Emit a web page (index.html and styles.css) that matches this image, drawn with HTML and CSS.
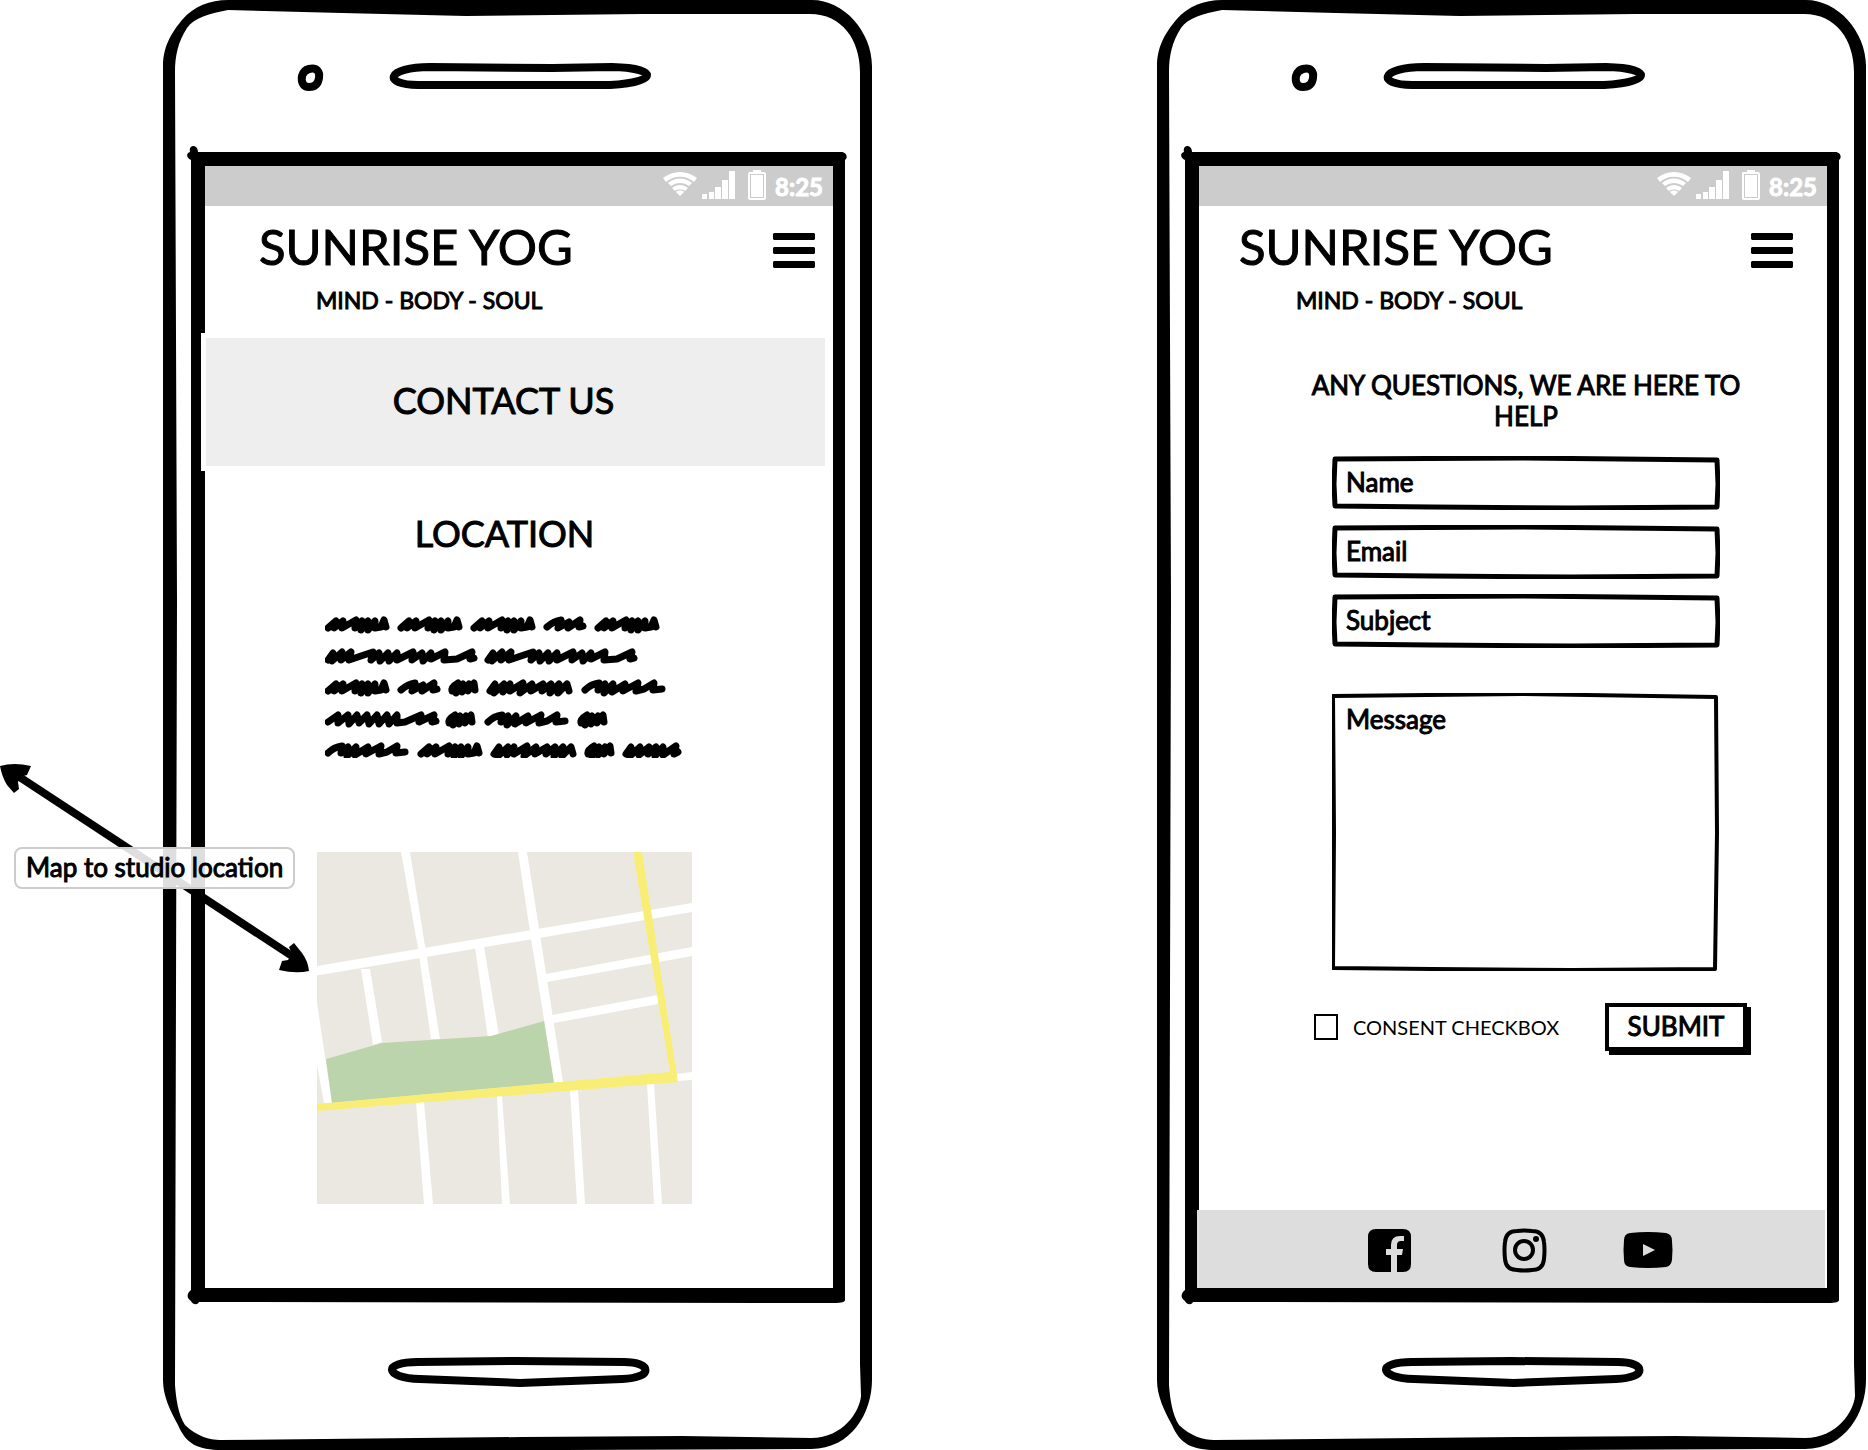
FILE: index.html
```
<!DOCTYPE html>
<html lang="en">
<head>
<meta charset="utf-8">
<title>Sunrise Yog – mobile wireframes</title>
<meta name="viewport" content="width=device-width, initial-scale=1">
<link rel="stylesheet" href="styles.css">
</head>
<body>
<svg class="defs" aria-hidden="true">
  <defs>
    <symbol id="phone-frame" viewBox="0 0 710 1450" preserveAspectRatio="none">
      <path fill-rule="evenodd" d="M66 0H650C682 0 710 32 710 66V1380C710 1412 690 1449 649 1449L400 1450L60 1450C36 1450 24 1444 16 1425C8 1410 1 1396 1 1380V66C1 44 12 30 20 20C32 6 48 0 66 0ZM66 10C46 14 32 18 25 28C16 42 13 56 13 72L15 600L13 1385C14 1398 16 1414 23 1425C34 1436 48 1440 58 1440L360 1437L520 1436L649 1438C682 1438 698 1410 699 1396L698 1364V72C698 40 680 14 648 14L480 14L304 16L180 13Z"/>
      <path d="M28 152C26 144 36 144 36 152H679C685 152 686 158 683 160V1300C683 1302 680 1303 672 1303L37 1302C35 1306 30 1304 29 1301C24 1298 25 1293 29 1290V160C24 158 24 153 28 152ZM43 166V1288H671V166Z" fill-rule="evenodd"/>
      <path class="line" d="M147 69C155 67 158 72 157 78C156 85 152 87 147 87C141 87 139 82 140 76C141 72 143 70 147 69Z"/>
      <path class="line" d="M268 67C224 67 220 85 256 85H448C498 82 496 68 450 67L390 68Z"/>
      <path class="line" d="M355 1361L256 1362C220 1362 222 1378 258 1379L358 1383L460 1379C492 1378 490 1362 462 1362Z"/>
    </symbol>
    <symbol id="status-icons" viewBox="0 0 104 32">
      <path d="M0 8C10 0 24 0 34 8L31 12C23 5 11 5 3 12ZM5 13C12 7 22 7 29 13L26 16C20 12 14 12 8 16ZM9 18C14 14 20 14 25 18L22 21C19 19 15 19 12 21ZM13 22C15 20 19 20 21 22L17 26Z"/>
      <path d="M39 24h5v5h-5zM46 22h5v7h-5zM52 17h6v12h-6zM59 10h6v19h-6zM66 1h6v28h-6z"/>
      <path d="M86 2H90V0H98V2H101Q103 2 103 4V28Q103 30 101 30H87Q85 30 85 28V4Q85 2 86 2ZM87 4V28H101V4Z" fill-rule="evenodd"/>
      <path d="M88 5h12v22H88z"/>
    </symbol>
    <symbol id="bars" viewBox="0 0 42 36">
      <path d="M1 0h40l1 1v5l-1 1H1L0 6V1zM1 14h40l1 1v5l-1 1H1l-1-1v-5zM1 28h40l1 1v5l-1 1H1l-1-1v-5z"/>
    </symbol>
    <symbol id="box" viewBox="0 0 388 54" preserveAspectRatio="none">
      <path vector-effect="non-scaling-stroke" d="M3 3L190 2L385 4L386 28L385 51L240 52L100 51L3 50L2 28Z"/>
    </symbol>
    <symbol id="box-tall" viewBox="0 0 388 278" preserveAspectRatio="none">
      <path vector-effect="non-scaling-stroke" d="M1 3L190 1L384 4L385 140L383 276L240 277L100 276L1 275L2 140Z"/>
    </symbol>
  </defs>
</svg>

<main class="board">
  <section class="phone phone-contact">
    <svg class="frame" aria-hidden="true"><use href="#phone-frame"/></svg>
    <div class="screen">
      <div class="status"><svg class="status-icons" aria-hidden="true"><use href="#status-icons"/></svg><span>8:25</span></div>
      <header class="site-header">
        <div class="brand"><h1>SUNRISE YOG</h1><p>MIND - BODY - SOUL</p></div>
        <button class="menu" type="button" aria-label="Menu"><svg aria-hidden="true"><use href="#bars"/></svg></button>
      </header>
      <div class="banner"><h2>CONTACT US</h2></div>
      <div class="location">
        <h2>LOCATION</h2>
        <svg class="scribble" viewBox="0 0 358 142" role="img" aria-label="Address placeholder">
          <defs>
            <path id="w1" d="M3 12L11 5L9 12L18 5L17 12L31 4L30 12L37 5L36 14L43 5L43 14L50 5L50 12L56 11L59 4L61 11"/>
            <path id="w2" d="M3 11Q10 5 17 4L14 12L25 6L24 12L36 4L35 11L39 10"/>
            <path id="w3" d="M3 12Q2 8 9 4L7 14L14 5L13 13L20 5L19 12L25 4L26 11"/>
            <path id="w4" d="M3 11Q9 5 17 4L16 11L23 5L22 14L31 5L30 13L43 5L41 12L56 4L54 12L62 10L72 4L71 11L80 10"/>
            <path id="w5" d="M3 12L8 5L7 14L17 5L16 13L23 5L23 12L36 4L33 14L45 5L44 12L56 5L55 12L64 5L63 14L72 5L71 14L80 5L82 12"/>
            <path id="w6" d="M3 12L8 5L7 13L17 4L16 12L26 4L24 12L48 4L46 12L54 5L55 13L63 5L64 13L72 5L72 12L88 4L87 12L97 5L98 13L106 5L106 11L120 4L119 12L132 11L147 4L145 11L149 10"/>
          </defs>
          <use href="#w1"/><use href="#w1" x="73"/><use href="#w1" x="146"/><use href="#w2" x="219"/><use href="#w1" x="270"/>
          <use href="#w6" y="32"/><use href="#w6" x="160" y="32"/>
          <use href="#w1" y="63"/><use href="#w2" x="73" y="63"/><use href="#w3" x="124" y="63"/><use href="#w5" x="162" y="63"/><use href="#w4" x="257" y="63"/>
          <path d="M3 106L13 99L13 107L23 99L24 108L32 99L34 107L42 99L44 108L52 99L54 108L62 99L64 108L72 99L72 107L80 106L96 99L94 106L109 99L107 106L111 105"/>
          <use href="#w3" x="121" y="95"/><use href="#w4" x="160" y="95"/><use href="#w3" x="253" y="95"/>
          <use href="#w4" y="126"/><use href="#w1" x="93" y="126"/><use href="#w5" x="166" y="126"/><use href="#w3" x="260" y="126"/>
          <path transform="translate(298 126)" d="M3 12L8 5L7 14L17 5L16 13L26 5L25 12L33 5L32 14L40 5L40 13L53 4L51 12L55 10"/>
        </svg>
        <svg class="map" viewBox="0 0 375 352" role="img" aria-label="Street map">
          <path fill="#ebe8e1" d="M0 0H375V352H0z"/>
          <g fill="#fff">
            <path d="M84 0h9l15 94 15 93h-9L101 96ZM201 0h9l36 230h-9L213 80ZM0 114L375 51V60L0 123.500ZM44 117h9l12 73-9 3ZM158 95h9l15 88-11 3ZM229 122L375 95v9L230 130ZM235 163L341 143v9L237 171ZM0 151L15 251H7L0 213ZM99 250h8l9 102h-9ZM180 244h5l8 108h-8ZM253 238h8l7 114h-8ZM330 232h7l8 120h-8ZM360 222l15-2v8l-15 1Z"/>
          </g>
          <path fill="#bcd4ac" d="M9 207L65 191 174 184 227 169 237 231 15 251Z"/>
          <path fill="#f9ee75" d="M316 0h9l36 230L0 259v-7L353 220Z"/>
        </svg>
      </div>
    </div>
    <svg class="arrow" viewBox="0 0 312 212" aria-hidden="true">
      <path d="M18 13L292 193" stroke="#000" stroke-width="8"/>
      <path d="M0 3Q14 -1 31 3L27 12L20 14L18 19L19 26L14 30L7 22Q2 14 0 3ZM309 208Q296 211 279 207L282 198L288 197L292 191L289 184L294 180L302 190Q308 198 309 208Z"/>
    </svg>
    <p class="callout">Map to studio location</p>
  </section>

  <section class="phone phone-form">
    <svg class="frame" aria-hidden="true"><use href="#phone-frame"/></svg>
    <div class="screen">
      <div class="status"><svg class="status-icons" aria-hidden="true"><use href="#status-icons"/></svg><span>8:25</span></div>
      <header class="site-header">
        <div class="brand"><h1>SUNRISE YOG</h1><p>MIND - BODY - SOUL</p></div>
        <button class="menu" type="button" aria-label="Menu"><svg aria-hidden="true"><use href="#bars"/></svg></button>
      </header>
      <form class="contact-form">
        <h2>ANY QUESTIONS, WE ARE HERE TO HELP</h2>
        <div class="field"><svg aria-hidden="true"><use href="#box"/></svg><input type="text" aria-label="Name" placeholder="Name"></div>
        <div class="field"><svg aria-hidden="true"><use href="#box"/></svg><input type="email" aria-label="Email" placeholder="Email"></div>
        <div class="field"><svg aria-hidden="true"><use href="#box"/></svg><input type="text" aria-label="Subject" placeholder="Subject"></div>
        <div class="field message"><svg aria-hidden="true"><use href="#box-tall"/></svg><textarea aria-label="Message" placeholder="Message"></textarea></div>
        <div class="actions">
          <input type="checkbox" id="consent"><label for="consent">CONSENT CHECKBOX</label>
          <button class="submit" type="submit">SUBMIT</button>
        </div>
      </form>
      <footer class="social">
        <a href="#facebook" aria-label="Facebook"><svg viewBox="0 0 43 43" width="43" height="43"><path d="M8 0H35Q43 0 43 8V35Q43 43 35 43H29V26H34L35 20H29V16Q29 12 33 12H36V7H32Q23 7 23 16V20H18V26H23V43H8Q0 43 0 35V8Q0 0 8 0Z"/></svg></a>
        <a href="#instagram" aria-label="Instagram"><svg viewBox="0 0 43 43" width="43" height="43"><path fill="none" stroke="#000" stroke-width="4" d="M14 2Q21 1 29 2Q40 2 41 13Q42 21 41 30Q40 41 29 41Q21 42 14 41Q3 41 2 30Q1 21 2 13Q3 2 14 2Z"/><circle cx="21" cy="21" r="9" fill="none" stroke="#000" stroke-width="4"/><circle cx="33" cy="10" r="3"/></svg></a>
        <a href="#youtube" aria-label="YouTube"><svg viewBox="0 0 50 36" width="50" height="36"><path fill-rule="evenodd" d="M7 1Q25-1 43 1Q49 2 49 9Q50 18 49 28Q48 34 43 35Q25 37 7 35Q1 34 1 28Q0 18 1 8Q1 2 7 1ZM20 12V24L32 18Z"/></svg></a>
      </footer>
    </div>
  </section>
</main>
</body>
</html>
```
FILE: styles.css
```
* { box-sizing: border-box; }
body { margin: 0; background: #fff; color: #000; font-family: Lato, "Open Sans", sans-serif; font-size: 24px; overflow-x: hidden; -webkit-text-stroke: 1px currentColor; }
h1, h2, p { margin: 0; font-weight: 400; }
input, textarea, button { font: inherit; color: inherit; -webkit-text-stroke: inherit; }
.defs { position: absolute; width: 0; height: 0; }
.board { display: grid; grid-template-columns: repeat(2, minmax(0, 710px)); justify-content: space-between; padding: 0 2px 0 162px; }
.phone { position: relative; padding: 166px 39px 162px 43px; }
.frame { position: absolute; inset: 0; width: 100%; height: 100%; overflow: visible; }
.line { fill: none; stroke: #000; stroke-width: 8px; stroke-linejoin: round; }
.screen { position: relative; display: flex; flex-direction: column; min-height: 1122px; }

.status { display: flex; align-items: center; justify-content: flex-end; gap: 8px; height: 40px; padding-right: 10px; background: #ccc; color: #fff; font-weight: 700; }
.status-icons { width: 104px; height: 32px; fill: #fff; }
.site-header { display: flex; justify-content: space-between; align-items: flex-start; height: 132px; padding: 10px 18px 0 54px; }
.phone-form .site-header { padding-right: 34px; padding-left: 40px; }
.brand h1 { font-size: 49px; line-height: 60px; }
.brand p { margin-top: 8px; padding-left: 57px; font-size: 23px; line-height: 32px; }
.menu { margin: 17px 0 0; padding: 0; border: 0; background: none; }
.menu svg { display: block; width: 42px; height: 36px; }

.banner { display: grid; place-items: center; height: 128px; margin: 0 8px 0 1px; padding: 0 24px 4px 0; background: #eee; box-shadow: 0 0 0 5px #fff; }
.banner h2, .location h2 { font-size: 36px; line-height: 44px; }
.location { display: flex; flex-direction: column; align-items: center; padding: 45px 29px 84px 0; }
.scribble { width: 358px; height: 142px; margin: 61px 2px 94px 0; fill: none; stroke: #000; stroke-width: 7px; stroke-linecap: round; stroke-linejoin: round; }
.map { width: 375px; height: 352px; }

.arrow { position: absolute; top: 763px; left: -162px; width: 312px; height: 212px; }
.callout { position: absolute; top: 847px; left: -148px; padding: 0 10px 2px; border: 2px solid #ccc; border-radius: 8px; background: rgba(255, 255, 255, .87); font-size: 26px; line-height: 36px; white-space: nowrap; }

.contact-form { display: flex; flex-direction: column; align-items: center; flex: 1; padding: 32px 10px 0 36px; }
.contact-form h2 { max-width: 460px; margin-bottom: 24px; font-size: 26px; line-height: 31px; text-align: center; }
.field { position: relative; width: 388px; height: 54px; margin-bottom: 15px; }
.field svg { position: absolute; inset: 0; width: 100%; height: 100%; overflow: visible; fill: none; stroke: #000; stroke-width: 5px; stroke-linejoin: round; }
.field input, .field textarea { position: relative; display: block; width: 100%; height: 100%; padding: 0 14px 2px; border: 0; outline: 0; background: none; font-size: 26px; resize: none; }
.field textarea { padding-top: 10px; line-height: 32px; }
::placeholder { color: #000; opacity: 1; }
.message { height: 278px; margin-top: 30px; }
.message svg { stroke-width: 4px; }
.actions { display: flex; align-items: center; align-self: stretch; margin-top: 17px; padding: 0 70px 0 79px; }
.actions input { appearance: none; width: 24px; height: 26px; margin: 0 15px 0 0; border: 2px solid #000; }
.actions label { font-size: 20px; -webkit-text-stroke: 0; }
.submit { width: 142px; height: 48px; margin-left: auto; padding: 0 0 2px; border: 4px solid #000; background: #fff; box-shadow: 4px 4px 0 #000; font-size: 26px; }
.social { display: flex; align-items: center; height: 78px; margin: 0 2px 0 -2px; padding: 2px 0 0 171px; background: #ddd; }
.social a { display: block; color: #000; }
.social svg { display: block; overflow: visible; }
.social a + a { margin-left: 92px; }
.social a:last-child { margin-left: 77px; }
```
